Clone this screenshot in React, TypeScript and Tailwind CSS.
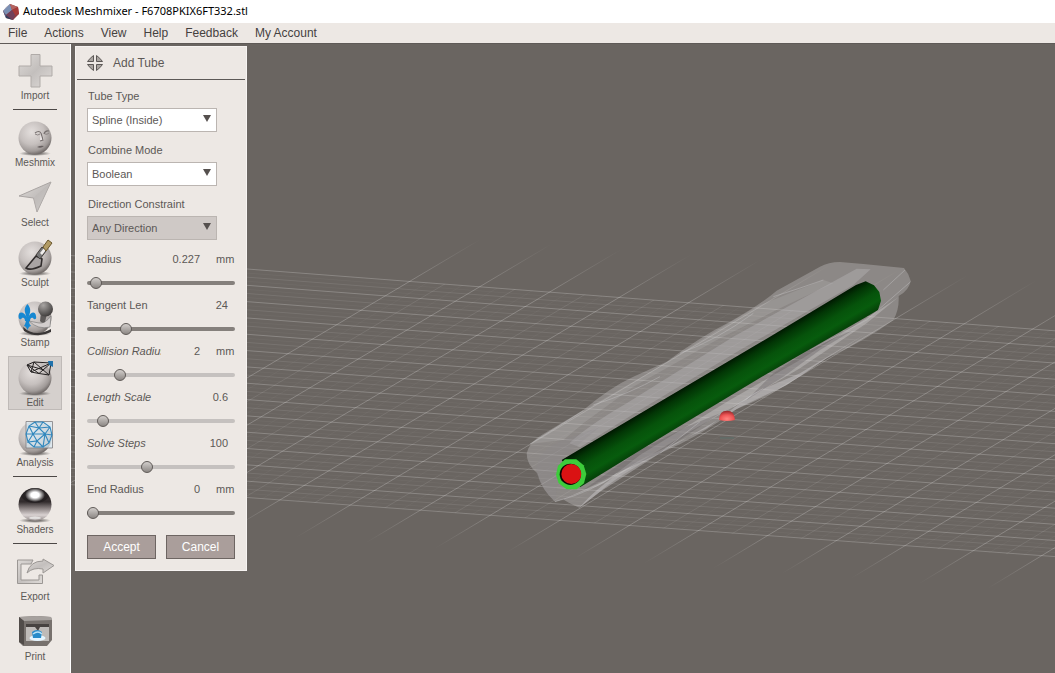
import React, { useState } from 'react';
import clsx from 'clsx';

type IconProps = { children: React.ReactNode };

const Icon: React.FC<IconProps> = ({ children }) => (
  <svg viewBox="0 0 40 40" className="w-10 h-10 shrink-0" fill="none" aria-hidden="true">
    {children}
  </svg>
);

const Ball = () => (
  <>
    <ellipse cx="20" cy="37.5" rx="16" ry="2.5" fill="url(#shadow)" />
    <circle cx="20" cy="22" r="16.5" fill="url(#ball)" />
  </>
);

const MeshmixerLogo = () => (
  <svg viewBox="0 0 16 16" className="w-4 h-4" aria-hidden="true">
    <path d="M7 0 15 3 16 10 10 16 3 14 0 7Z" fill="#8d3d42" />
    <path d="M7 0 0 7 3 3Z" fill="#b9bfce" />
    <path d="M7 0 9 6 3 11 0 7Z" fill="#7b91b5" />
    <path d="M0 7 3 11 3 14Z" fill="#4a5f89" />
    <path d="M3 11 10 16 3 14Z" fill="#35415f" />
    <path d="M7 0 15 3 9 6Z" fill="#b56460" />
    <path d="M9 6 15 3 16 10 12 11Z" fill="#a63a38" />
    <path d="M9 6 12 11 10 16 3 11Z" fill="#71405a" />
  </svg>
);

const ImportIcon = () => (
  <Icon>
    <path d="M16 5.5h9v11.5h12v10H25v11h-9V27H4V17h12z" fill="url(#metal)" stroke="#b0aba8" />
  </Icon>
);

const MeshmixIcon = () => (
  <Icon>
    <Ball />
    <path d="M26 15l3 9-4 1z" fill="#f2eded" />
    <path d="M20 17q4-3 6 0 1 3 2 7l-3 1M34 15q-4-1-5 3" stroke="#77706f" strokeWidth="1.2" />
    <path d="M20 18q3 2 5 0M30 18q2 1 4-1" stroke="#8c8584" />
    <path d="M22 31q4-2 7-1-3 3-7 1Z" fill="#665f5f" />
  </Icon>
);

const SelectIcon = () => (
  <Icon>
    <path d="M36 6 22 36 18.5 22 4 20Z" fill="url(#metal)" stroke="#aaa5a3" />
    <path d="M36 6 22 36 18.5 22Z" fill="#bcb7b5" opacity=".5" />
  </Icon>
);

const SculptIcon = () => (
  <Icon>
    <Ball />
    <path d="M21 20 11 32q4 3 15-2l1-7Z" fill="#a9a4a4" stroke="#302c2c" strokeWidth="1.6" />
    <path d="m21 19 6-8 4 4-6 8Z" fill="#777" stroke="#413d3b" />
    <path d="M25 17 29 12l2 2-4 5Z" fill="#f1eeec" />
    <path d="m28 11 5-7 4 3-6 8Z" fill="#b29b64" stroke="#69562b" />
  </Icon>
);

const StampIcon = () => (
  <Icon>
    <Ball />
    <path d="M8 31q12 11 28 2v3q-14 7-27-1Z" fill="#393636" />
    <path d="M14 25q9 9 21 6l1-11q-6 8-12 7Z" fill="#d3cecd" stroke="#777" strokeWidth=".6" />
    <path d="m26 16 6 2-2 8q-3 2-5-1Z" fill="#5e5a59" />
    <circle cx="30.5" cy="13" r="7.5" fill="url(#knob)" />
    <path
      d="M12.500 8C8 13 10 16 11.500 21 10 17 4 14 3.500 20 3.500 24 6 24 7 22 9 21 10 23 10 25h1q-1 4-2 5 2 0 3.500 4Q14 30 16 30q-2-2-2-5h1c0-2 1-4 3-3 1 2 4 2 3-2-1-6-6-3-7.500 1 2-5 3-8-1-13Z"
      fill="#1688d2"
    />
  </Icon>
);

const EditIcon = () => (
  <Icon>
    <Ball />
    <path
      d="M12 9 19 6 36 7 34 19 24 17.500 16 16ZM12 9 24 17.500M19 6 16 16 36 7 24 17.500M19 6 34 19M12 9 29 14"
      stroke="#242121"
      strokeWidth="1"
    />
    <path d="M33 5h5v6l-4-2Z" fill="#1f72ac" />
  </Icon>
);

const AnalysisIcon = () => (
  <Icon>
    <Ball />
    <path d="M11 5.500h26.500V32H11z" fill="#d7e8f2" fillOpacity=".7" stroke="#827f82" strokeWidth=".8" />
    <path
      d="M20 6 14 10 11 18 13 26 19 31 28 31 34 27 37 19 35 11 28 6ZM20 6 24 12 28 6M24 12 14 10M24 12 35 11M24 12 18 18 11 18M18 18 14 10M24 12 30 18 35 11M30 18 37 19M18 18 30 18M18 18 22 25 30 18M18 18 13 26 22 25 19 31M22 25 28 31 30 18 34 27"
      stroke="#3187bd"
      strokeWidth="1.1"
    />
  </Icon>
);

const ShadersIcon = () => (
  <Icon>
    <ellipse cx="20" cy="37.500" rx="16" ry="2.500" fill="url(#shadow)" />
    <circle cx="20" cy="21.500" r="16.500" fill="url(#chrome)" />
    <path d="M6 14Q10 5 20 5t14 9q-5 6-14 6T6 14Z" fill="#1d191a" opacity=".6" />
    <ellipse cx="20" cy="12" rx="10" ry="7" fill="url(#shine)" />
    <ellipse cx="20" cy="35" rx="6" ry="1.500" fill="#fff" opacity=".6" />
  </Icon>
);

const ExportIcon = () => (
  <Icon>
    <path d="M18 10H2.500v23.500h25V25H24v5H6V14h10Z" fill="url(#metal)" stroke="#9b9794" />
    <path d="M12 23q3-12 16-12V9l11 6.500L28 23v-4q-10-2-16 4Z" fill="url(#metal)" stroke="#9b9794" />
  </Icon>
);

const PrintIcon = () => (
  <Icon>
    <path d="m4 7 18-1 14 1 1 3v20l-5 6H8l-4-4Z" fill="#77716d" />
    <path d="m4 7 18-1 14 1 1 3-28 1Z" fill="#a6a19e" />
    <path d="m4 7 5 4v24l-5-3Z" fill="#514c49" />
    <path d="M11 14h23v17H11z" fill="#bfbbb8" />
    <path d="M11 14h23v3H11zM20 17h5l-2 4Z" fill="#474240" />
    <ellipse cx="22.500" cy="28" rx="8" ry="3" fill="#e4f5ff" />
    <path d="M17 22q5-4 10 0l-1 6h-8Z" fill="#278bca" />
    <path d="M18 24q5-4 9 0" stroke="#b9e3fa" strokeWidth="1.500" />
  </Icon>
);

// Gradients shared by the toolbar icons
const IconDefs = () => (
  <svg className="absolute w-0 h-0" aria-hidden="true">
    <defs>
      <radialGradient id="ball" cx=".4" cy=".32" r=".68">
        <stop offset="0" stopColor="#e4dfdd" />
        <stop offset=".55" stopColor="#c6c0be" />
        <stop offset=".85" stopColor="#a19b99" />
        <stop offset="1" stopColor="#756f6d" />
      </radialGradient>
      <radialGradient id="knob" cx=".35" cy=".25" r=".8">
        <stop offset="0" stopColor="#a9a5a3" />
        <stop offset="1" stopColor="#3c3938" />
      </radialGradient>
      <radialGradient id="shadow">
        <stop offset="0" stopColor="#2d2a29" stopOpacity=".9" />
        <stop offset="1" stopColor="#2d2a29" stopOpacity="0" />
      </radialGradient>
      <radialGradient id="shine">
        <stop offset=".4" stopColor="#fff" />
        <stop offset="1" stopColor="#fff" stopOpacity="0" />
      </radialGradient>
      <linearGradient id="metal" x1="0" y1="0" x2="1" y2="1">
        <stop offset="0" stopColor="#dedad7" />
        <stop offset=".5" stopColor="#c3bfbd" />
        <stop offset="1" stopColor="#dfdbd8" />
      </linearGradient>
      <linearGradient id="chrome" x1="0" y1="0" x2="0" y2="1">
        <stop offset="0" stopColor="#3c3637" />
        <stop offset=".42" stopColor="#322c2d" />
        <stop offset=".62" stopColor="#8b8383" />
        <stop offset=".82" stopColor="#d9d2d2" />
        <stop offset="1" stopColor="#8d8685" />
      </linearGradient>
    </defs>
  </svg>
);

const menus = ['File', 'Actions', 'View', 'Help', 'Feedback', 'My Account'];

const toolGroups = [
  [{ name: 'Import', icon: ImportIcon }],
  [
    { name: 'Meshmix', icon: MeshmixIcon },
    { name: 'Select', icon: SelectIcon },
    { name: 'Sculpt', icon: SculptIcon },
    { name: 'Stamp', icon: StampIcon },
    { name: 'Edit', icon: EditIcon },
    { name: 'Analysis', icon: AnalysisIcon },
  ],
  [{ name: 'Shaders', icon: ShadersIcon }],
  [
    { name: 'Export', icon: ExportIcon },
    { name: 'Print', icon: PrintIcon },
  ],
];

const Toolbar = () => {
  const [active, setActive] = useState('Edit');

  return (
    <nav className="w-[71px] shrink-0 flex flex-col items-center gap-1.5 pt-[5px] bg-[#ede8e4] border-r border-white">
      {toolGroups.map((group, index) => (
        <React.Fragment key={group[0].name}>
          {index > 0 && <hr className="w-11 border-0 h-px shrink-0 bg-[#4c4846]" />}
          {group.map(({ name, icon: ToolIcon }) => (
            <button
              key={name}
              type="button"
              onClick={() => setActive(name)}
              className={clsx(
                'w-[54px] h-[54px] shrink-0 flex flex-col items-center text-[10px] leading-[14px] text-[#5c5856]',
                active === name && 'bg-[#d5d0cd] outline outline-1 -outline-offset-1 outline-[#bfbab7]'
              )}
            >
              <ToolIcon />
              {name}
            </button>
          ))}
        </React.Fragment>
      ))}
    </nav>
  );
};

type DropdownProps = {
  id: string;
  label: string;
  options: string[];
  disabled?: boolean;
};

const Dropdown: React.FC<DropdownProps> = ({ id, label, options, disabled }) => (
  <div className="flex flex-col gap-1 w-[130px]">
    <label htmlFor={id} className="leading-4 pl-px">{label}</label>
    <div className="relative">
      <select
        id={id}
        disabled={disabled}
        className="block w-full h-6 appearance-none pl-1 bg-white border border-[#bbb5b1] text-[#5c5856] opacity-100 disabled:bg-[#cfc9c6] focus:outline-none"
      >
        {options.map((option) => (
          <option key={option}>{option}</option>
        ))}
      </select>
      <svg viewBox="0 0 8 7" className="absolute right-1.5 top-[7px] w-2 h-[7px] pointer-events-none" aria-hidden="true">
        <path d="M0 0h8L4 7Z" fill="#55504e" />
      </svg>
    </div>
  </div>
);

type SliderProps = {
  id: string;
  label: string;
  value: string;
  unit?: string;
  position: number;
  advanced?: boolean;
};

const Slider: React.FC<SliderProps> = ({ id, label, value, unit, position, advanced }) => {
  const [current, setCurrent] = useState(position);

  return (
    <div className="h-[46px] flex flex-col gap-2">
      <div className="flex leading-4">
        <label
          htmlFor={id}
          className={clsx('w-[74px] overflow-hidden whitespace-nowrap', advanced && 'italic')}
        >
          {label}
        </label>
        <output htmlFor={id} className={clsx('text-right', unit ? 'w-[39px]' : 'w-[67px]')}>
          {value}
        </output>
        {unit && <span className="ml-4">{unit}</span>}
      </div>
      <input
        type="range"
        id={id}
        min={0}
        max={136}
        value={current}
        onChange={(e) => setCurrent(Number(e.target.value))}
        className={clsx(
          'block w-full h-4 appearance-none bg-transparent',
          '[&::-webkit-slider-runnable-track]:h-1 [&::-webkit-slider-runnable-track]:rounded-full',
          '[&::-webkit-slider-thumb]:appearance-none [&::-webkit-slider-thumb]:w-3 [&::-webkit-slider-thumb]:h-3 [&::-webkit-slider-thumb]:-mt-1',
          '[&::-webkit-slider-thumb]:rounded-full [&::-webkit-slider-thumb]:border [&::-webkit-slider-thumb]:border-[#5f5a57]',
          '[&::-webkit-slider-thumb]:bg-linear-to-b [&::-webkit-slider-thumb]:from-[#d2cecb] [&::-webkit-slider-thumb]:to-[#8d8885]',
          advanced
            ? '[&::-webkit-slider-runnable-track]:bg-[#c5c1bf]'
            : '[&::-webkit-slider-runnable-track]:bg-[#85807c]'
        )}
      />
    </div>
  );
};

const AddTubePanel = () => (
  <form
    onSubmit={(e) => e.preventDefault()}
    className="relative w-[172px] ml-1 mt-0.5 pb-[11px] bg-[#ede8e4] border border-[#f7f4f2] text-[11px] text-[#5c5856]"
  >
    <h2 className="flex items-center gap-[9px] h-[33px] mx-px pl-[9px] text-xs border-b border-[#5c5856]">
      <svg viewBox="0 0 18 18" className="w-[18px] h-[18px]" aria-hidden="true">
        <g fill="#aaa5a1" stroke="#5c5856" strokeLinejoin="round">
          <path d="M7.500 1.500v6h-6Q4 4 7.500 1.500Z" />
          <path d="M10.500 1.500v6h6Q14 4 10.500 1.500Z" />
          <path d="M7.500 16.500v-6h-6Q4 14 7.500 16.500Z" />
          <path d="M10.500 16.500v-6h6Q14 14 10.500 16.500Z" />
        </g>
      </svg>
      Add Tube
    </h2>
    <div className="px-[11px] pt-2">
      <div className="flex flex-col gap-2.5">
        <Dropdown id="tube-type" label="Tube Type" options={['Spline (Inside)', 'Spline', 'Linear']} />
        <Dropdown id="combine-mode" label="Combine Mode" options={['Boolean', 'Append']} />
        <Dropdown id="direction" label="Direction Constraint" options={['Any Direction']} disabled />
      </div>
      <div className="pt-[11px]">
        <Slider id="radius" label="Radius" value="0.227" unit="mm" position={3} />
        <Slider id="tangent" label="Tangent Len" value="24" position={33} />
        <Slider id="collision" label="Collision Radius" value="2" unit="mm" position={27} advanced />
        <Slider id="length" label="Length Scale" value="0.6" position={10} advanced />
        <Slider id="steps" label="Solve Steps" value="100" position={54} advanced />
        <Slider id="end-radius" label="End Radius" value="0" unit="mm" position={0} />
      </div>
      <div className="flex gap-2.5 pt-2 text-xs text-white">
        <button type="submit" className="flex-1 h-6 bg-[#aa9e9b] border border-[#6d6562]">Accept</button>
        <button type="button" className="flex-1 h-6 bg-[#aa9e9b] border border-[#6d6562]">Cancel</button>
      </div>
    </div>
  </form>
);

// Ground plane: each line is given by its height at x = 247 and its slope
const ORIGIN = 247;
const rowLines = Array.from({ length: 57 }, (_, i) => ({ step: i, y: 269 + (i * 228.5) / 56, slope: 0.0765 - i * 0.00006 }));
const diagonalLines = Array.from({ length: 61 }, (_, i) => ({ step: i, y: 378 + (i * 47.2) / 4, slope: -0.594 - i * 0.00025 }));

const lineOpacity = (step: number) => (step % 4 === 0 ? 0.22 : step % 2 === 0 ? 0.09 : 0.03);

const lineAt = (line: { y: number; slope: number }, x: number) => line.y + line.slope * (x - ORIGIN);

const Scene = () => (
  <svg
    viewBox="71 44 984 629"
    preserveAspectRatio="xMinYMin slice"
    className="absolute inset-0 w-full h-full"
    role="img"
    aria-label="Model view"
  >
    <defs>
      <linearGradient id="fade" gradientUnits="userSpaceOnUse" x1="247" y1="221" x2="224" y2="533">
        <stop offset="0" stopColor="#000" />
        <stop offset=".16" stopColor="#fff" />
        <stop offset=".87" stopColor="#fff" />
        <stop offset="1" stopColor="#000" />
      </linearGradient>
      <mask id="far" maskUnits="userSpaceOnUse" x="0" y="0" width="1100" height="700">
        <path d="M0 0H1100V700H0Z" fill="url(#fade)" />
      </mask>
      <clipPath id="plane">
        <path d="M0 250 1100 334V561L0 479Z" />
      </clipPath>
      <linearGradient id="tube" gradientUnits="userSpaceOnUse" x1="650" y1="384" x2="700" y2="468">
        <stop offset="0" stopColor="#001801" />
        <stop offset=".2" stopColor="#023605" />
        <stop offset=".5" stopColor="#06530b" />
        <stop offset=".75" stopColor="#075c0d" />
        <stop offset="1" stopColor="#053f08" />
      </linearGradient>
      <radialGradient id="handle" cx=".5" cy=".8" r=".8">
        <stop offset="0" stopColor="#ff8580" />
        <stop offset=".5" stopColor="#ef5555" />
        <stop offset="1" stopColor="#8e2426" />
      </radialGradient>
    </defs>

    <g mask="url(#far)" stroke="#fff">
      {rowLines.map((line) => (
        <line
          key={line.step}
          x1="71"
          y1={lineAt(line, 71)}
          x2="1055"
          y2={lineAt(line, 1055)}
          opacity={lineOpacity(line.step)}
        />
      ))}
      {diagonalLines.filter((line) => line.step % 4 === 0).map((line) => (
        <line
          key={line.step}
          x1="71"
          y1={lineAt(line, 71)}
          x2="1055"
          y2={lineAt(line, 1055)}
          opacity={lineOpacity(line.step)}
        />
      ))}
      <g clipPath="url(#plane)">
        {diagonalLines.filter((line) => line.step % 4 !== 0).map((line) => (
          <line
            key={line.step}
            x1="71"
            y1={lineAt(line, 71)}
            x2="1055"
            y2={lineAt(line, 1055)}
            opacity={lineOpacity(line.step)}
          />
        ))}
      </g>
    </g>

    <g transform="translate(500 240) scale(.33333)">
      {/* Translucent model */}
      <path
        d="M80 640Q88 605 130 582L250 510Q330 442 400 410L500 365Q600 290 690 245 780 195 830 152L960 80Q985 66 1020 66L1090 72 1212 84Q1226 100 1232 122 1228 150 1196 168 1198 210 1180 240 1100 300 980 355 900 410 860 435 780 480 710 507 600 590 480 640 350 710 300 755L238 803Q205 790 190 778L165 785Q125 750 112 700 80 675 80 640Z"
        fill="#c4c2c3"
        fillOpacity=".38"
      />
      <path d="M90 612Q150 570 250 512L500 367Q650 268 780 195L970 120 1000 130 860 195 650 300 400 440 250 550 190 600Z" fill="#fff" fillOpacity=".1" />
      <path d="M208 610Q260 560 380 490L700 290 1070 86 1112 88 1060 135 720 330 420 510 240 622Z" fill="#b8b6b8" fillOpacity=".42" />
      <path d="M190 778 330 715 420 645 690 480 900 360 1130 215 1195 172 1100 250 900 385 720 490 560 580 380 690 300 735Z" fill="#d4d2d3" fillOpacity=".38" />
      <path d="M238 803Q300 730 420 660L620 565 760 460 900 400 1100 280 980 355 860 435 720 502 480 640 300 755Z" fill="#dad8d9" fillOpacity=".38" />
      <path d="M250 750 350 700 480 640 660 520 560 560 420 630ZM740 480 850 410 960 330 1060 270 940 320 820 400Z" fill="#625c5e" fillOpacity=".35" />
      <g fill="none" stroke="#c7c5c6" strokeWidth="2.500" opacity=".5">
        <path d="M90 612Q150 575 250 512M280 495Q390 460 480 410M540 340Q650 300 760 220M820 170Q900 145 970 120" />
        <path d="M165 785Q280 755 350 700M1150 150 1215 90M1232 125 1100 240 930 330M700 500 790 445M480 640 600 545" />
      </g>
      <path d="M110 700Q100 640 190 600L300 560 180 660 165 785Q125 750 110 700Z" fill="#8b888b" fillOpacity=".25" />

      {/* Tube */}
      <path d="M185 660 500 473 800 296 1068 135 1097 124 1122 136 1138 156 1143 182 1134 210 1100 230 800 402 500 582 240 742Z" fill="url(#tube)" />
      <path d="m195 658 34 0 22 18 8 26-7 28-22 18-30 0-24-18-8-26 6-27Z" fill="#3dcc3b" />
      <circle cx="211" cy="703" r="32" fill="#0b0504" />
      <circle cx="214" cy="702" r="30" fill="#da1213" />

      {/* Pivot handle */}
      <path d="M657 540Q658 512 681 512T705 540Q681 546 657 540Z" fill="url(#handle)" />
      <path d="M660 594h42" stroke="#577874" strokeWidth="2" />
    </g>
  </svg>
);

const App: React.FC = () => {
  return (
    <div className="min-h-screen flex flex-col bg-[#6a6561] font-['Liberation_Sans',Arial,sans-serif]">
      <IconDefs />
      <header className="flex items-center gap-1 h-[23px] pl-[3px] bg-white text-[11px] text-black font-['Noto_Sans','Open_Sans',sans-serif]">
        <MeshmixerLogo />
        <h1>Autodesk Meshmixer - F6708PKIX6FT332.stl</h1>
      </header>

      <div className="flex h-[21px] pl-2 gap-[17px] bg-[#ede8e4] border-b border-[#5f5a57] text-xs text-[#45413f]">
        {menus.map((menu) => (
          <button key={menu} type="button">{menu}</button>
        ))}
      </div>

      <div className="relative flex-1 flex items-stretch">
        <Toolbar />
        <main className="flex-1 relative">
          <Scene />
          <AddTubePanel />
        </main>
      </div>
    </div>
  );
};

export default App;
